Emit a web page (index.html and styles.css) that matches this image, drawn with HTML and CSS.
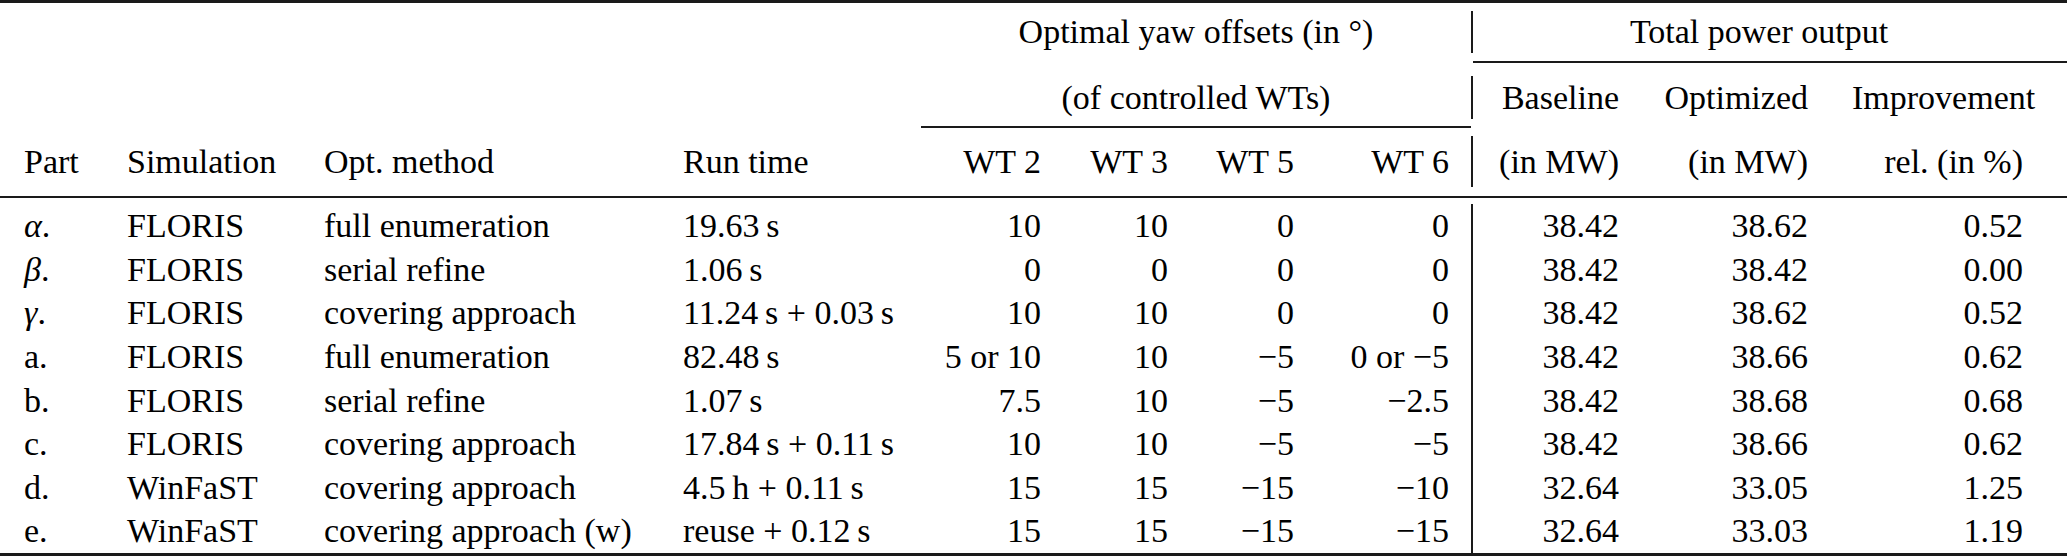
FILE: index.html
```html
<!DOCTYPE html>
<html lang="en">
<head>
<meta charset="utf-8">
<title>Yaw optimisation results</title>
<link rel="stylesheet" href="styles.css">
</head>
<body>
<div class="table">
  <div class="rule top"></div>
  <div class="head">
    <span class="yaw-title">Optimal yaw offsets (in °)</span>
    <span class="bar b1"></span>
    <span class="power-title">Total power output</span>
    <span class="power-rule"></span>

    <span class="yaw-sub">(of controlled WTs)</span>
    <span class="bar b2"></span>
    <span class="h2 c10 r">Baseline</span>
    <span class="h2 c11 r">Optimized</span>
    <span class="h2 c12 r last">Improvement</span>
    <span class="yaw-rule"></span>

    <span class="bar b3"></span>
    <span class="h3 first">Part</span>
    <span class="h3">Simulation</span>
    <span class="h3">Opt. method</span>
    <span class="h3">Run time</span>
    <span class="h3 r">WT 2</span>
    <span class="h3 r">WT 3</span>
    <span class="h3 r">WT 5</span>
    <span class="h3 r">WT 6</span>
    <span class="h3 r">(in MW)</span>
    <span class="h3 r">(in MW)</span>
    <span class="h3 r last">rel. (in %)</span>
  </div>
  <div class="rule mid"></div>
  <div class="body">
    <span class="bar bb"></span>
    <div class="row"><span><i>α</i>.</span><span>FLORIS</span><span>full enumeration</span><span>19.63&thinsp;s</span><span>10</span><span>10</span><span>0</span><span>0</span><span>38.42</span><span>38.62</span><span>0.52</span></div>
    <div class="row"><span><i>β</i>.</span><span>FLORIS</span><span>serial refine</span><span>1.06&thinsp;s</span><span>0</span><span>0</span><span>0</span><span>0</span><span>38.42</span><span>38.42</span><span>0.00</span></div>
    <div class="row"><span><i>γ</i>.</span><span>FLORIS</span><span>covering approach</span><span>11.24&thinsp;s + 0.03&thinsp;s</span><span>10</span><span>10</span><span>0</span><span>0</span><span>38.42</span><span>38.62</span><span>0.52</span></div>
    <div class="row"><span>a.</span><span>FLORIS</span><span>full enumeration</span><span>82.48&thinsp;s</span><span>5 or 10</span><span>10</span><span>−5</span><span>0 or −5</span><span>38.42</span><span>38.66</span><span>0.62</span></div>
    <div class="row"><span>b.</span><span>FLORIS</span><span>serial refine</span><span>1.07&thinsp;s</span><span>7.5</span><span>10</span><span>−5</span><span>−2.5</span><span>38.42</span><span>38.68</span><span>0.68</span></div>
    <div class="row"><span>c.</span><span>FLORIS</span><span>covering approach</span><span>17.84&thinsp;s + 0.11&thinsp;s</span><span>10</span><span>10</span><span>−5</span><span>−5</span><span>38.42</span><span>38.66</span><span>0.62</span></div>
    <div class="row"><span>d.</span><span>WinFaST</span><span>covering approach</span><span>4.5&thinsp;h + 0.11&thinsp;s</span><span>15</span><span>15</span><span>−15</span><span>−10</span><span>32.64</span><span>33.05</span><span>1.25</span></div>
    <div class="row"><span>e.</span><span>WinFaST</span><span>covering approach (w)</span><span>reuse + 0.12&thinsp;s</span><span>15</span><span>15</span><span>−15</span><span>−15</span><span>32.64</span><span>33.03</span><span>1.19</span></div>
  </div>
  <div class="rule bottom"></div>
</div>
</body>
</html>
```

FILE: styles.css
```css
html, body {
  margin: 0;
  padding: 0;
  background: #fff;
}

.table {
  width: 2067px;
  font-family: "Liberation Serif", "Times New Roman", serif;
  font-size: 34px;
  color: #000;
}

.rule { background: #1a1a1a; }
.rule.top { height: 3px; }
.rule.mid { height: 2px; }
.rule.bottom { height: 3px; }

.head, .body {
  display: grid;
  grid-template-columns: 105px 197px 359px 260px 142px 127px 126px 155px 2px 168px 189px 237px;
}

.head {
  grid-template-rows: 8px 42px 8px 1.5px 13.5px 43px 7px 1.5px 8.5px 51px 9px;
}

.head > span, .row > span {
  padding: 0 22px;
  white-space: nowrap;
}

.bar {
  grid-column: 9;
  width: 1.5px;
  background: #1a1a1a;
  padding: 0 !important;
}
.b1 { grid-row: 2; }
.b2 { grid-row: 6; }
.b3 { grid-row: 10; }

.yaw-title, .power-title {
  grid-row: 2;
  line-height: 42px;
  text-align: center;
}
.yaw-title { grid-column: 5 / 9; }
.power-title { grid-column: 10 / 13; padding-right: 44px !important; }

.power-rule {
  grid-column: 10 / 13;
  grid-row: 4;
  background: #1a1a1a;
  padding: 0 !important;
}

.yaw-sub {
  grid-column: 5 / 9;
  grid-row: 6;
  line-height: 43px;
  text-align: center;
}
.h2 { grid-row: 6; line-height: 43px; }
.c10 { grid-column: 10; }
.c11 { grid-column: 11; }
.c12 { grid-column: 12; }

.yaw-rule {
  grid-column: 5 / 9;
  grid-row: 8;
  background: #1a1a1a;
  padding: 0 !important;
}

.h3 { grid-row: 10; line-height: 51px; }

.r { text-align: right; }
.first { padding-left: 24px !important; }
.last { padding-right: 44px !important; }

.body {
  grid-template-rows: repeat(8, 43.625px);
  padding-top: 6px;
}
.bb { grid-row: 1 / -1; }

.row { display: contents; }
.row > span { line-height: 43.625px; }
.row > span:first-child { padding-left: 24px; }
.row > span:nth-child(n+5) { text-align: right; }
.row > span:last-child { padding-right: 44px; }
```
